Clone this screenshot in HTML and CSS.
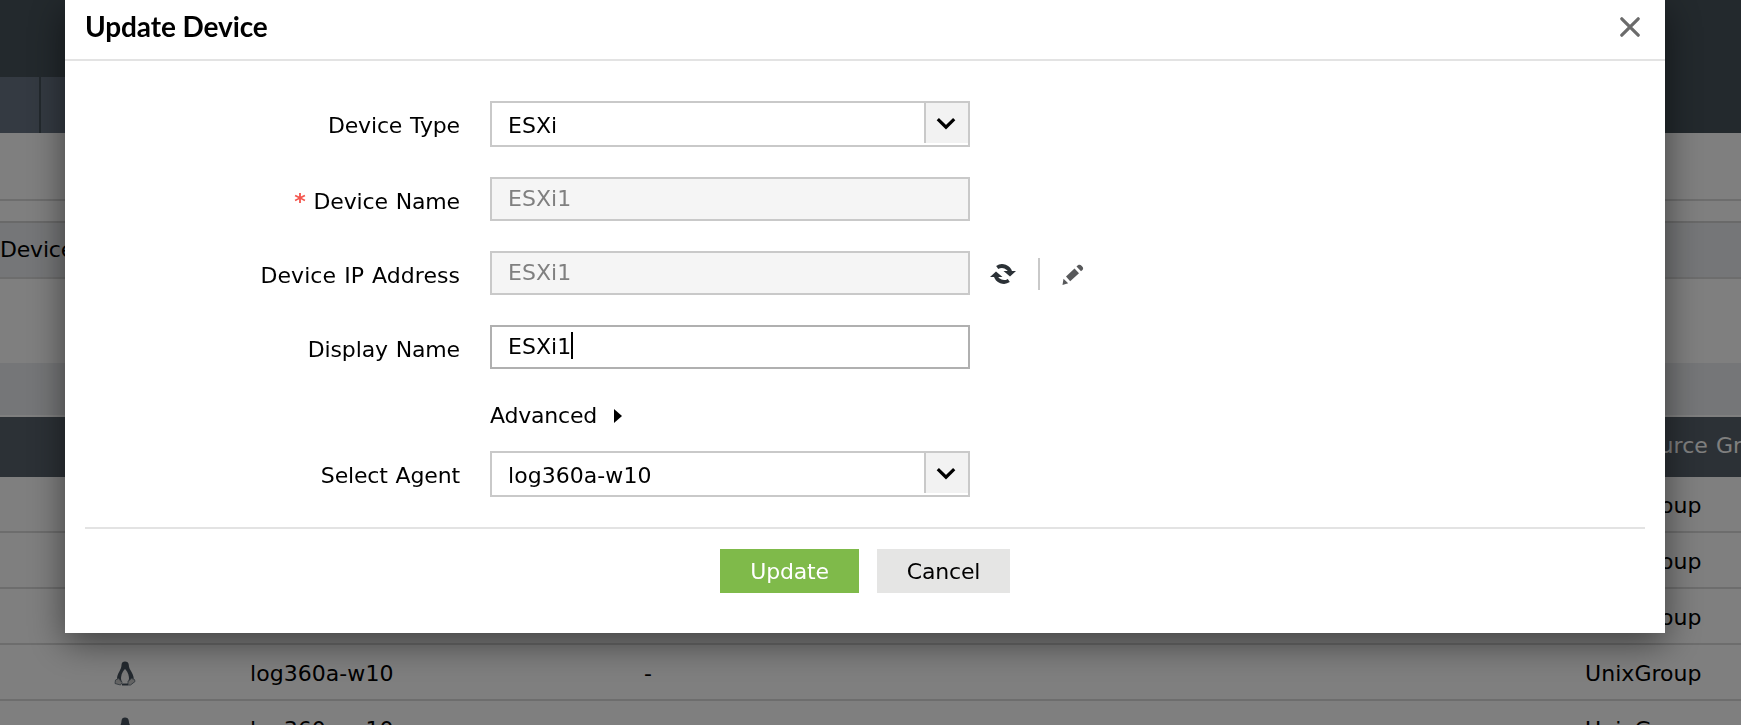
FILE: index.html
```
<!DOCTYPE html>
<html lang="en">
<head>
    <meta charset="UTF-8">
    <meta name="viewport" content="width=device-width, initial-scale=1.0">
    <title>Update Device</title>
    <link rel="stylesheet" href="styles.css">
</head>
<body>

<svg class="sprite" width="0" height="0">
    <symbol id="linux" viewBox="0 0 22 25">
        <path d="M7.500 4C7.500 1.500 9 .5 11 .5s3.800 1 3.800 3.500c0 5 5 7.500 5 14.500L17 21H6l-3-3C3 12 7.500 9 7.500 4z" fill="#46525e"/>
        <path d="M11 8c2 1.500 4 6 4 9.500 0 2.500-2 4.500-4.200 4.500S7 20 7 17.500C7 14 9 9.500 11 8z" fill="#f4f4f4"/>
        <path d="M4.500 17.500L8 21.500 6.500 24 1 22.500 1.500 19zM17.500 17.500L14 20.500v3.500h2.500l4.500-3.500-.5-2z" fill="#c8c8c8" stroke="#75808a"/>
        <path d="M8 22.500h6v2H8z" fill="#46525e"/>
    </symbol>
    <symbol id="chevron" viewBox="0 0 20 14">
        <path d="M1.800 2.200L10 10.200l8.200-8" fill="none" stroke="#000" stroke-width="3.200"/>
    </symbol>
</svg>

<div class="page">
    <div class="top-bar"></div>
    <div class="nav-bar"><span class="nav-tab"></span><span class="nav-tab nav-tab-next"></span></div>
    <div class="sub-bar"></div>
    <div class="filter-bar">Device</div>
    <div class="tools"></div>
    <div class="pager"></div>
    <div class="device-table">
        <div class="device-row device-head"><span></span><span></span><span></span><span class="group-head">Source Group</span></div>
        <div class="device-row"><svg class="os-icon"><use href="#linux"/></svg><span>log360a-w10</span><span>-</span><span>UnixGroup</span></div>
        <div class="device-row"><svg class="os-icon"><use href="#linux"/></svg><span>log360a-w10</span><span>-</span><span>UnixGroup</span></div>
        <div class="device-row"><svg class="os-icon"><use href="#linux"/></svg><span>log360a-w10</span><span>-</span><span>UnixGroup</span></div>
        <div class="device-row"><svg class="os-icon"><use href="#linux"/></svg><span>log360a-w10</span><span>-</span><span>UnixGroup</span></div>
        <div class="device-row"><svg class="os-icon"><use href="#linux"/></svg><span>log360a-w10</span><span>-</span><span>UnixGroup</span></div>
    </div>
</div>

<div class="overlay">
    <div class="modal">
        <div class="modal-header">
            <h2 class="modal-title">Update Device</h2>
            <svg class="close-icon" viewBox="0 0 20 20">
                <path d="M1.800 1.800l16.400 16.400M18.200 1.800l-16.400 16.400" stroke="#6b6b6b" stroke-width="3.200" stroke-linecap="round"/>
            </svg>
        </div>
        <form class="device-form">
            <div class="form-row">
                <label class="form-label">Device Type</label>
                <div class="form-select">
                    <span class="select-value">ESXi</span>
                    <span class="select-arrow"><svg class="chevron"><use href="#chevron"/></svg></span>
                </div>
            </div>
            <div class="form-row">
                <label class="form-label"><span class="required">*</span> Device Name</label>
                <div class="form-input disabled">ESXi1</div>
            </div>
            <div class="form-row">
                <label class="form-label label-wide">Device IP Address</label>
                <div class="form-input disabled">ESXi1</div>
                <svg class="refresh-icon" viewBox="0 0 26 24">
                    <path d="M7.200 5.500A8.800 8.800 0 0 1 20.500 10.500M18.800 18.500A8.800 8.800 0 0 1 5.500 13.500" fill="none" stroke="#2b3136" stroke-width="3.800"/>
                    <path d="M13.500 9L26 9 20 14.500zM0 15L12.500 15 6 9.500z" fill="#2b3136"/>
                </svg>
                <span class="icon-divider"></span>
                <svg class="edit-icon" viewBox="0 0 22 22">
                    <path d="M1.500 14.800L6.200 19.200 .5 21zM4 12.500L12.500 4.500 17 9.200 8.200 17.300zM14.500 2.500C16.500 .2 18 .2 19.800 2S21.800 5.500 19 7.200z" fill="#58595b"/>
                </svg>
            </div>
            <div class="form-row">
                <label class="form-label">Display Name</label>
                <div class="form-input focused">ESXi1<span class="caret"></span></div>
            </div>
            <div class="advanced">Advanced <span class="advanced-arrow"></span></div>
            <div class="form-row">
                <label class="form-label">Select Agent</label>
                <div class="form-select">
                    <span class="select-value">log360a-w10</span>
                    <span class="select-arrow"><svg class="chevron"><use href="#chevron"/></svg></span>
                </div>
            </div>
        </form>
        <div class="modal-footer">
            <button type="button" class="btn btn-update">Update</button>
            <button type="button" class="btn btn-cancel">Cancel</button>
        </div>
    </div>
</div>

</body>
</html>
```
FILE: styles.css
```
* {
    box-sizing: border-box;
}

body {
    margin: 0;
    height: 725px;
    overflow: hidden;
    font-family: Verdana, 'DejaVu Sans', sans-serif;
    font-size: 22px;
    letter-spacing: 0.05px;
    word-spacing: 1px;
    color: #000;
    background-color: #fff;
}

.sprite {
    position: absolute;
}

.page {
    height: 725px;
    overflow: hidden;
}

.top-bar {
    height: 77px;
    background-color: #46525a;
}

.nav-bar {
    display: flex;
    height: 56px;
    background-color: #46525a;
}

.nav-tab {
    width: 39px;
    background-color: #687484;
}

.nav-tab-next {
    width: 100px;
    margin-left: 2px;
}

.sub-bar {
    height: 68px;
    border-bottom: 2px solid #dadada;
}

.filter-bar {
    height: 58px;
    margin-top: 20px;
    line-height: 53px;
    letter-spacing: -0.2px;
    background-color: #ebedf0;
    border-top: 2px solid #d2d2d2;
    border-bottom: 2px solid #dadada;
}

.tools {
    height: 84px;
}

.pager {
    height: 54px;
    background-color: #ebedf0;
    border-bottom: 2px solid #fff;
}

.device-row {
    display: grid;
    grid-template-columns: 250px 394px 941px 156px;
    align-items: center;
    height: 56px;
    padding-top: 3px;
    white-space: nowrap;
    border-bottom: 2px solid #dadada;
}

.device-head {
    height: 60px;
    padding: 0 0 4px;
    color: #fff;
    background-color: #58626c;
    border-bottom: none;
}

.group-head {
    padding-left: 47px;
}

.os-icon {
    width: 22px;
    height: 25px;
    margin-left: 114px;
}

.overlay {
    position: fixed;
    top: 0;
    left: 0;
    width: 1741px;
    height: 725px;
    padding-left: 65px;
    background-color: rgba(0, 0, 0, 0.5);
}

.modal {
    width: 1600px;
    height: 633px;
    background-color: #fff;
    box-shadow: 0 10px 34px rgba(0, 0, 0, 0.5);
}

.modal-header {
    display: flex;
    justify-content: space-between;
    height: 61px;
    padding: 0 25px 0 20px;
    border-bottom: 2px solid #e3e3e3;
}

.modal-title {
    margin: 0;
    font-family: Lato, sans-serif;
    font-size: 28px;
    font-weight: 700;
    line-height: 53px;
    letter-spacing: -0.1px;
    word-spacing: 0;
}

.close-icon {
    width: 20px;
    height: 20px;
    margin-top: 17px;
}

.device-form {
    display: flex;
    flex-direction: column;
    height: 468px;
    margin: 0 20px;
    padding-top: 40px;
    border-bottom: 2px solid #e3e3e3;
}

.form-row {
    display: flex;
    margin-bottom: 30px;
}

.form-label {
    width: 375px;
    height: 44px;
    margin-right: 30px;
    padding-top: 3px;
    line-height: 44px;
    letter-spacing: -0.15px;
    text-align: right;
}

.label-wide {
    letter-spacing: 0.05px;
}

.required {
    color: #f4574f;
    font-weight: bold;
}

.form-input,
.form-select {
    width: 480px;
    height: 44px;
    padding-left: 16px;
    line-height: 39px;
    border: 2px solid #c9c9c9;
}

.form-select {
    display: flex;
    justify-content: space-between;
    height: 46px;
    line-height: 45px;
}

.disabled {
    color: #808080;
    background-color: #f5f5f5;
}

.focused {
    display: flex;
    border-color: #b0b0b0;
}

.caret {
    width: 2px;
    height: 27px;
    margin-top: 5px;
    background-color: #000;
}

.select-arrow {
    display: flex;
    align-items: center;
    justify-content: center;
    width: 44px;
    height: 40px;
    background-color: #f2f2f2;
    border-left: 2px solid #c9c9c9;
}

.chevron {
    width: 20px;
    height: 14px;
    margin: 2px 2px 0 0;
}

.refresh-icon {
    width: 26px;
    height: 24px;
    margin: 11px 0 0 20px;
}

.icon-divider {
    width: 2px;
    height: 32px;
    margin: 7px 0 0 22px;
    background-color: #c9c9c9;
}

.edit-icon {
    width: 22px;
    height: 22px;
    margin: 13px 0 0 22px;
}

.advanced {
    display: flex;
    align-items: center;
    height: 32px;
    margin-left: 405px;
    letter-spacing: -0.2px;
}

/* keeps the agent row clear of the advanced toggle */
.advanced + .form-row {
    margin-top: auto;
}

.advanced-arrow {
    margin: 2px 0 0 17px;
    border-top: 7px solid transparent;
    border-bottom: 7px solid transparent;
    border-left: 8px solid #000;
}

.modal-footer {
    display: flex;
    gap: 18px;
    padding: 20px 0 0 655px;
}

.btn {
    height: 44px;
    padding: 0;
    border: none;
    font-family: inherit;
    font-size: 22px;
    letter-spacing: -0.2px;
    cursor: pointer;
}

.btn-update {
    width: 139px;
    color: #fff;
    background-color: #7fba4a;
}

.btn-cancel {
    width: 133px;
    color: #000;
    background-color: #e5e5e4;
}
```
